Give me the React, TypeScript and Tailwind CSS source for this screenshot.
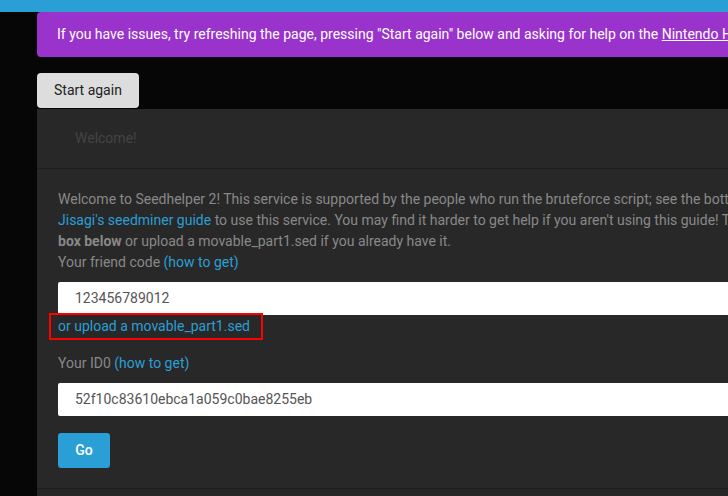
import React from "react";

export default function App() {
  return (
    <div
      className="w-[728px] h-[496px] overflow-hidden bg-[#060606] text-[14px] leading-[21px]"
      style={{ fontFamily: "Roboto, 'Liberation Sans', sans-serif" }}
    >
      <div className="h-[12px] bg-[#2a9fd6]" />
      <div className="w-[1100px] pl-[37px] flex flex-col items-start">
        <div className="w-full rounded-l-[4px] bg-[#9933cc] px-[20px] py-[12px] text-white whitespace-nowrap">
          If you have issues, try refreshing the page, pressing "Start again" below and asking for help on the{" "}
          <a className="underline">Nintendo Homebrew Discord</a>.
        </div>
        <button className="mt-[16px] h-[35px] rounded-[4px] bg-[#dddddd] px-[17px] text-[#222222]">
          Start again
        </button>
        <div className="mt-[1px] w-full bg-[#282828] border-b border-[#1c1c1c]">
          <div className="h-[60px] flex items-center pl-[38px] border-b border-[#1e1e1e] text-[#444444]">
            Welcome!
          </div>
          <div className="pl-[21px] pr-[20px] pt-[20px] pb-[20px] text-[#888888]">
            <div className="whitespace-nowrap">
              Welcome to Seedhelper 2! This service is supported by the people who run the bruteforce script; see the bottom of the page for more info. Please follow
            </div>
            <div className="whitespace-nowrap">
              <a className="text-[#2a9fd6]">Jisagi's seedminer guide</a> to use this service. You may find it harder to get help if you aren't using this guide! To get started, enter your friend code in the
            </div>
            <div className="whitespace-nowrap">
              <b className="font-bold">box below</b> or upload a movable_part1.sed if you already have it.
            </div>
            <div>
              Your friend code <a className="text-[#2a9fd6]">(how to get)</a>
            </div>
            <div className="mt-[9px] h-[33px] w-full rounded-l-[2px] bg-white pl-[17px] flex items-center text-[#555555]">
              123456789012
            </div>
            <div className="relative mt-[1px]">
              <a className="text-[#2a9fd6]">or upload a movable_part1.sed</a>
              <span className="absolute left-[-9px] top-[-3px] w-[214px] h-[27px] border-2 border-[#ff0000]" />
            </div>
            <div className="mt-[16px]">
              Your ID0 <a className="text-[#2a9fd6]">(how to get)</a>
            </div>
            <div className="mt-[9px] h-[33px] w-full rounded-l-[2px] bg-white pl-[17px] flex items-center text-[#555555]">
              52f10c83610ebca1a059c0bae8255eb
            </div>
            <button className="mt-[17px] h-[35px] w-[52px] rounded-[3px] bg-[#2a9fd6] text-white font-medium">
              Go
            </button>
          </div>
        </div>
        <div className="w-full h-[20px] bg-[#262626]" />
      </div>
    </div>
  );
}
